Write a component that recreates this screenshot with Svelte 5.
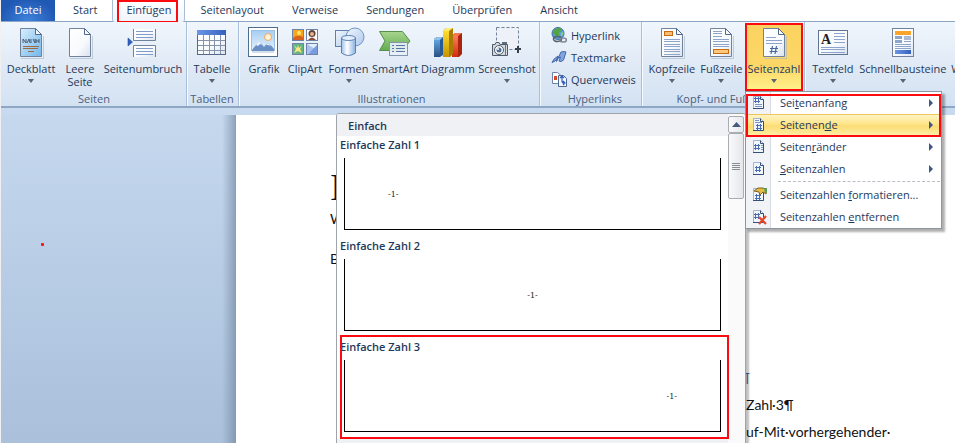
<script>
  const tabs = ['Start', 'Einfügen', 'Seitenlayout', 'Verweise', 'Sendungen', 'Überprüfen', 'Ansicht'];
  const active = 'Einfügen';

  const groups = [
    { name: 'Seiten', pad: 2, items: [
      { icon: 'cover', label: 'Deckblatt', drop: true, w: 56 },
      { icon: 'blank', label: 'Leere', second: 'Seite', w: 42 },
      { icon: 'break', label: 'Seitenumbruch', w: 84 }
    ] },
    { name: 'Tabellen', pad: 0, items: [{ icon: 'table', label: 'Tabelle', drop: true, w: 50 }] },
    { name: 'Illustrationen', pad: 6, items: [
      { icon: 'picture', label: 'Grafik', w: 38 },
      { icon: 'clipart', label: 'ClipArt', w: 44 },
      { icon: 'shapes', label: 'Formen', drop: true, w: 43 },
      { icon: 'smartart', label: 'SmartArt', w: 50 },
      { icon: 'chart', label: 'Diagramm', w: 56 },
      { icon: 'screenshot', label: 'Screenshot', drop: true, w: 62 }
    ] },
    { name: 'Hyperlinks', pad: 10, links: [
      { icon: 'globe', label: 'Hyperlink' },
      { icon: 'bookmark', label: 'Textmarke' },
      { icon: 'crossref', label: 'Querverweis' }
    ] },
    { name: 'Kopf- und Fußzeile', pad: 4, items: [
      { icon: 'header', label: 'Kopfzeile', drop: true, w: 52 },
      { icon: 'footer', label: 'Fußzeile', drop: true, w: 47 },
      { icon: 'number', label: 'Seitenzahl', drop: true, w: 58, open: true }
    ] },
    { name: '', pad: 5, items: [
      { icon: 'textbox', label: 'Textfeld', drop: true, w: 46 },
      { icon: 'parts', label: 'Schnellbausteine', drop: true, w: 94 },
      { icon: '', label: 'WordArt', w: 46 }
    ] }
  ];

  const menu = [
    { kind: 'top', text: ['Sei', 't', 'enanfang'], sub: true },
    { kind: 'bottom', text: ['Seitenen', 'd', 'e'], sub: true, hot: true },
    { kind: 'margin', text: ['Seiten', 'r', 'änder'], sub: true },
    { kind: 'plain', text: ['', 'S', 'eitenzahlen'], sub: true },
    { kind: 'format', text: ['Seitenzahlen ', 'f', 'ormatieren...'], split: true },
    { kind: 'remove', text: ['Seitenzahlen ', 'e', 'ntfernen'] }
  ];

  const presets = [
    { name: 'Einfache Zahl 1', align: 'start' },
    { name: 'Einfache Zahl 2', align: 'center' },
    { name: 'Einfache Zahl 3', align: 'end', marked: true }
  ];
</script>

{#snippet sheet(fill)}
  <path d="M6 31.5H28.5V9" fill="none" stroke="#a9b6c8" opacity=".6" />
  <path d="M5.500 1.500H20.500L26.500 7.500V29.500H5.500Z" fill={fill} stroke="#71829c" />
  <path d="M20.500 1.500V7.500H26.500Z" fill="#f4f8fc" stroke="#53688a" />
{/snippet}

{#snippet bigIcon(name)}
  <svg class="big" viewBox="0 0 32 32" aria-hidden="true">
    {#if name === 'cover'}
      {@render sheet('url(#gCover)')}
      <path d="M8 16V12L11 16V12M12 16L14 12L15 16M16 16V12M18 12L20 16V12M21 12V16M21 14H24M24 12V16" stroke="#4b5c74" fill="none" />
      <path d="M8 19.500H24M8 21.500H23M13 24.500H19" stroke="#a06a45" />
    {:else if name === 'blank'}
      {@render sheet('url(#gPage)')}
    {:else if name === 'break'}
      <path d="M6.500 2V13.500H28.500V2" fill="url(#gPage)" stroke="#71829c" />
      <path d="M9 4.500H26M9 7.500H26M9 10.500H26" stroke="#7f9ccb" />
      <path d="M6.500 30V18.500H28.500V30" fill="url(#gPage)" stroke="#71829c" />
      <path d="M9 21.500H26M9 24.500H26M9 27.500H26" stroke="#7f9ccb" />
      <path d="M1 11L5.500 15L1 19Z" fill="#2f5fc4" stroke="#254a9c" stroke-width=".6" />
    {:else if name === 'table'}
      <rect x="1.500" y="3.500" width="28" height="24" fill="url(#gPage)" stroke="#53688a" />
      <rect x="1" y="3" width="29" height="5" fill="url(#gBlue)" />
      <path d="M2 13.500H29M2 18.500H29M2 23.500H29M7.500 8V27M13.500 8V27M18.500 8V27M24.500 8V27" stroke="#8593a8" />
    {:else if name === 'picture'}
      <rect x=".5" y=".5" width="29" height="29" fill="#fff" stroke="#4f6d8c" />
      <rect x="3.500" y="3.500" width="23" height="20" fill="url(#gSky)" stroke="#9cc0e2" />
      <circle cx="20" cy="10" r="3.500" fill="#fff3d2" stroke="#f0a662" />
      <path d="M4 23Q8 18 11 14.500Q14 17 16 20Q18 17 20 16Q23 18 26 22V24H4Z" fill="#6a8fc4" />
      <path d="M8 18L11 14L14 18L12 17L10 19ZM18 18L20 16L23 19L20 18Z" fill="#eef4fb" />
      <path d="M4 25H26" stroke="#d5dfea" stroke-width="2" />
    {:else if name === 'clipart'}
      <rect x="3.500" y="2.500" width="11" height="11" fill="#f8a51c" stroke="#6d84a8" />
      <path d="M4 11Q8 7 14 10V13H4Z" fill="#d8611c" /><circle cx="10" cy="6" r="2" fill="#ffe36a" />
      <rect x="17.500" y="2.500" width="11" height="11" fill="#fff" stroke="#6d84a8" />
      <circle cx="23" cy="6.500" r="3.500" fill="#5b4537" /><circle cx="23" cy="7" r="2" fill="#e8b48c" /><path d="M19 13Q23 8 27 13Z" fill="#8c4a3b" />
      <rect x="3.500" y="16.500" width="11" height="11" fill="#64b583" stroke="#6d84a8" />
      <path d="M5 18L8 21L9 18L10 21L13 19L11 22L13 26L9 24L5 26L7 22Z" fill="#fbe77c" />
      <rect x="17.500" y="16.500" width="11" height="11" fill="#e6eefc" stroke="#6d84a8" />
      <path d="M18 17L26 22L18 27Z" fill="#a9c0f0" /><path d="M28 18V27H19Z" fill="#7a9be2" />
    {:else if name === 'shapes'}
      <rect x="2.500" y="3.500" width="17" height="16" fill="url(#gLight)" stroke="#5e80af" />
      <circle cx="22" cy="10" r="9" fill="url(#gLight)" stroke="#6f95c8" />
      <path d="M8.500 11V26Q15.500 31 22.500 26V11" fill="url(#gCyl)" stroke="#5e80af" />
      <ellipse cx="15.500" cy="11" rx="7" ry="2.500" fill="#e2eefb" stroke="#5e80af" />
    {:else if name === 'smartart'}
      <path d="M.5 4.500H23.500L31 14L23.500 23.500H.5L6 14Z" fill="url(#gGreen)" stroke="#578f4a" />
      <rect x="10.500" y="15.500" width="18" height="13" fill="#e8eff7" fill-opacity=".92" stroke="#8295ae" />
      <path d="M13 18.500H15M13 21.500H15M13 24.500H15M17 18.500H26M17 21.500H26M17 24.500H26" stroke="#5577a8" />
    {:else if name === 'chart'}
      <path d="M2 12L5 10H11V28L8 30H2Z" fill="#245b98" /><path d="M2 13H8V30H2Z" fill="url(#gBar1)" /><path d="M2 12L5 10H11L8 13H2Z" fill="#8fc0ea" />
      <path d="M20 9L23 6H30V27L27 30H20Z" fill="#a8250c" /><path d="M20 9H26V30H20Z" fill="url(#gBar3)" /><path d="M20 9L23 6H30L26 9Z" fill="#f47a50" />
      <path d="M11 4L14 1H21V27L18 30H11Z" fill="#a67d00" /><path d="M11 4H17V30H11Z" fill="url(#gBar2)" /><path d="M11 4L14 1H21L17 4Z" fill="#ffeb70" />
    {:else if name === 'screenshot'}
      <rect x="5.500" y=".5" width="22" height="22" fill="#eef2f8" stroke="#718197" stroke-dasharray="3 2" />
      <path d="M1.500 17.500H4L5 15.500H8L9 17.500H16.500V28.500H1.500Z" fill="#d4d9df" stroke="#4f5b69" />
      <rect x="11" y="15" width="5" height="2" fill="#5f6c7c" />
      <circle cx="8" cy="23" r="4.500" fill="#f7f9fb" stroke="#4f5b69" /><circle cx="8" cy="23" r="2.500" fill="#4e6f95" /><circle cx="7" cy="22" r="1" fill="#fff" />
      <path d="M14.500 18V28" stroke="#6a7685" /><path d="M27 19V26M24 22H30" stroke="#37404c" stroke-width="2" />
    {:else if name === 'header'}
      {@render sheet('url(#gPage)')}
      <rect x="8.500" y="4.500" width="8" height="4" fill="#f8bd74" stroke="#c96b13" />
      <path d="M8 12.500H24M8 14.500H24M8 17.500H24M8 19.500H24M8 22.500H24M8 24.500H24M8 27.500H24" stroke="#8da5cd" />
    {:else if name === 'footer'}
      {@render sheet('url(#gPage)')}
      <path d="M8 4.500H17M8 6.500H17M8 9.500H17M8 12.500H24M8 14.500H24M8 17.500H24M8 19.500H24" stroke="#8da5cd" />
      <rect x="8.500" y="22.500" width="15" height="4" fill="#fbc97a" stroke="#c96b13" />
    {:else if name === 'number'}
      {@render sheet('url(#gPage)')}
      <path d="M8 10.500H18M8 13.500H24M8 16.500H24" stroke="#8da5cd" />
      <path d="M14.500 19L13 27M18.500 19L17 27M12 21.500H20M11.500 24.500H19.500" stroke="#4867a0" stroke-width="1.200" fill="none" />
    {:else if name === 'textbox'}
      <rect x="1.500" y="3.500" width="29" height="24" fill="url(#gPage)" stroke="#60738f" />
      <text x="4" y="17" class="glyphA">A</text>
      <path d="M17 6.500H28M17 9.500H28M17 12.500H28M17 15.500H28M4 20.500H28M4 22.500H28M4 25.500H28" stroke="#8da5cd" />
    {:else if name === 'parts'}
      <rect x="5.500" y="1.500" width="21" height="28" fill="url(#gPage)" stroke="#71829c" />
      <rect x="8" y="4" width="16" height="4" fill="#fba42c" />
      <rect x="8" y="9" width="7" height="3" fill="#8da5cd" /><rect x="17" y="9" width="7" height="4" fill="#a9bbd9" />
      <rect x="8" y="13" width="7" height="3" fill="#8da5cd" />
      <path d="M17 14.500H24M8 17.500H24M8 19.500H24M8 21.500H24" stroke="#8da5cd" />
      <rect x="8" y="23" width="16" height="4" fill="url(#gBlue)" />
    {/if}
  </svg>
{/snippet}

{#snippet linkIcon(name)}
  <svg class="small" viewBox="0 0 16 16" aria-hidden="true">
    {#if name === 'globe'}
      <circle cx="7" cy="6.500" r="6" fill="#5a9fe0" stroke="#3b6ca3" />
      <path d="M3 3Q6 0 10 1.500L11 4L8 5L8.500 8L6 11L4 8L1.500 6Z" fill="#54a446" /><path d="M10 6L12.500 5L12 8L10 9Z" fill="#8ed07a" />
      <ellipse cx="6.500" cy="12" rx="4" ry="2.500" fill="none" stroke="#55626f" stroke-width="1.600" />
      <ellipse cx="12" cy="13" rx="3.500" ry="2" fill="none" stroke="#7b8794" stroke-width="1.600" />
    {:else if name === 'bookmark'}
      <path d="M1 13.500Q3 9 7 7L5.500 12.500L10 3Q14 2 15 3L12.500 11Q10 13.500 8 12L9.500 8Q6 9 4 12Z" fill="#84a5db" stroke="#3e66ad" />
    {:else if name === 'crossref'}
      <path d="M1.500 1.500H6.500L9.500 4V12.500H1.500Z" fill="#fff" stroke="#6d84a8" /><rect x="3" y="5" width="3" height="4" fill="#d44a28" />
      <path d="M7.500 4.500H12.500L15.500 7.500V15.500H7.500Z" fill="#f3f7fd" stroke="#4d6794" />
      <path d="M9 7L11 5L13 7M11 5.500V10Q11 12 13 12M12 10L14 12L12 14" fill="none" stroke="#2d5fba" stroke-width="1.200" />
    {/if}
  </svg>
{/snippet}

{#snippet hash(x, y)}
  <path transform="translate({x} {y})" d="M1.500 0V6M4.500 0V6M0 1.500H6M0 4.500H6" stroke="#4a6db0" fill="none" />
{/snippet}

{#snippet menuIcon(kind)}
  <svg class="small" viewBox="0 0 16 16" aria-hidden="true">
    <path d="M2.500 1.500H9.500L12.500 4.500V13.500H2.500Z" fill="#f1f6fc" stroke="#a3b4cc" />
    <path d="M9.500 1.500V4.500H12.500V13.500H2" fill="none" stroke="#344f7a" />
    {#if kind === 'top'}
      {@render hash(3, 2)}
      <path d="M4 9.500H11M4 11.500H11" stroke="#7e95bd" />
    {:else if kind === 'bottom'}
      <path d="M4 3.500H8M4 5.500H11" stroke="#7e95bd" />
      {@render hash(5, 7)}
    {:else if kind === 'margin'}
      {@render hash(3, 5)}
      <path d="M10 6.500H12M10 8.500H12M10 10.500H12" stroke="#7e95bd" />
    {:else if kind === 'plain'}
      {@render hash(4, 5)}
    {:else if kind === 'format'}
      {@render hash(4, 7)}
      <path d="M3 4L7 1H12L16 3L15 7L12 5L9 8L8 5Z" fill="#e3bb46" stroke="#80621b" /><path d="M13 1H16V6H14Z" fill="#5d9b5a" />
    {:else}
      {@render hash(3, 4)}
      <path d="M8 8L15 15M15 7L8 15" stroke="#e8452a" stroke-width="2.200" />
    {/if}
  </svg>
{/snippet}

<svg class="defs" width="0" height="0" aria-hidden="true">
  <defs>
    <linearGradient id="gPage" x2="1" y2="1"><stop stop-color="#fff" /><stop offset=".6" stop-color="#f8fafd" /><stop offset="1" stop-color="#d9e2f0" /></linearGradient>
    <linearGradient id="gCover" x2="1" y2="1"><stop stop-color="#d9eefc" /><stop offset="1" stop-color="#72b7ea" /></linearGradient>
    <linearGradient id="gBlue" x2="1" y2="0"><stop stop-color="#6b97e6" /><stop offset="1" stop-color="#3560bd" /></linearGradient>
    <linearGradient id="gSky" x2="0" y2="1"><stop stop-color="#a5cef3" /><stop offset="1" stop-color="#e6f2fc" /></linearGradient>
    <linearGradient id="gLight" x2="1" y2="1"><stop stop-color="#f2f7fd" /><stop offset="1" stop-color="#acc8ea" /></linearGradient>
    <linearGradient id="gCyl"><stop stop-color="#9dc0ea" /><stop offset=".4" stop-color="#fff" /><stop offset="1" stop-color="#86b0e2" /></linearGradient>
    <linearGradient id="gGreen" x2="0" y2="1"><stop stop-color="#a9d58e" /><stop offset="1" stop-color="#62ad50" /></linearGradient>
    <linearGradient id="gBar1" x2="0" y2="1"><stop stop-color="#5ea3e0" /><stop offset="1" stop-color="#2b4f7d" /></linearGradient>
    <linearGradient id="gBar2" x2="0" y2="1"><stop stop-color="#ffdc2e" /><stop offset="1" stop-color="#c69300" /></linearGradient>
    <linearGradient id="gBar3" x2="0" y2="1"><stop stop-color="#ff7d5c" /><stop offset="1" stop-color="#cf2c0c" /></linearGradient>
  </defs>
</svg>

<div class="app">
  <nav class="tabs">
    <button class="file">Datei</button>
    {#each tabs as tab}
      <button class="tab" class:active={tab === active}>
        {tab}
        {#if tab === active}<span class="callout tabMark"></span>{/if}
      </button>
    {/each}
  </nav>

  <div class="ribbon">
    {#each groups as group}
      <section class="group" style:--pad="{group.pad}px">
        {#if group.links}
          <div class="links">
            {#each group.links as link}
              <button class="link">{@render linkIcon(link.icon)}<span>{link.label}</span></button>
            {/each}
          </div>
        {:else}
          <div class="items">
            {#each group.items as item}
              <div class="slot" style:width="{item.w}px">
                <button class="item" class:open={item.open}>
                  {@render bigIcon(item.icon)}
                  <span class="label">{item.label}{#if item.second}<br />{item.second}{/if}</span>
                  {#if item.drop}<span class="caret"></span>{/if}
                </button>
                {#if item.open}
                  <span class="callout"></span>
                  <div class="menu">
                    {#each menu as row}
                      {#if row.split}<div class="split"></div>{/if}
                      <button class="row" class:hot={row.hot}>
                        {@render menuIcon(row.kind)}
                        <span class="rowText">{row.text[0]}<u>{row.text[1]}</u>{row.text[2]}</span>
                        {#if row.sub}<span class="sub"></span>{/if}
                      </button>
                    {/each}
                    <span class="callout menuMark"></span>
                  </div>
                {/if}
              </div>
            {/each}
          </div>
        {/if}
        <div class="groupName">{group.name}</div>
      </section>
    {/each}
  </div>

  <main class="workspace">
    <div class="desk"><span class="dot"></span></div>
    <article class="page">
      <div class="before">
        <h1>I</h1>
        <p>W</p>
        <p class="spaced">B</p>
      </div>
      <div class="after">
        <p class="mark">¶</p>
        <p>Zahl·3¶</p>
        <p>uf-Mit·vorhergehender·</p>
      </div>
    </article>

    <aside class="gallery">
      <div class="list">
        <h2>Einfach</h2>
        {#each presets as preset}
          <button class="preset">
            <span class="presetName">{preset.name}</span>
            <span class="preview" style:justify-content={preset.align}><span>-1-</span></span>
            {#if preset.marked}<span class="callout"></span>{/if}
          </button>
        {/each}
      </div>
      <div class="scroll">
        <button class="up" aria-label="Nach oben"><svg viewBox="0 0 9 5" width="9" height="5"><path d="M0 5L4.500 0L9 5Z" fill="#43597f" /></svg></button>
        <div class="thumb"><i></i><i></i><i></i><i></i></div>
      </div>
    </aside>
  </main>
</div>

<style>
  :global(body) { margin: 0; background: #fff; }
  .defs { position: absolute; }
  .app {
    position: relative;
    display: flex;
    flex-direction: column;
    height: 100vh;
    min-height: 440px;
    overflow: hidden;
    box-sizing: border-box;
    border-left: 1px solid #f0f0f0;
    font: 11px/13px "Open Sans", "Noto Sans", sans-serif;
    color: #1e395b;
  }
  button { font: inherit; color: inherit; border: 0; padding: 0; margin: 0; background: none; }
  .callout {
    position: absolute;
    inset: 0;
    border: 2px solid #fb0a10;
    pointer-events: none;
    z-index: 2;
  }

  .tabs { display: flex; flex: none; height: 22px; box-sizing: border-box; border-bottom: 1px solid #8ba5c4; }
  .file { width: 54px; margin-right: 4px; height: 21px; color: #fff; background: radial-gradient(ellipse at 50% 100%, #3f83dc, #2059b4 75%); padding-bottom: 2px; }
  .tab { position: relative; padding: 0 14px 2px; height: 21px; }
  .tab.active { height: 22px; margin: 0 1px; padding: 0 13px 3px; border: solid #a9bdd6; border-width: 0 1px; border-radius: 0 0 3px 3px; background: linear-gradient(#fff, #eff5fc); }
  .tabMark { inset: 0 6px -1px 4px; }

  .ribbon {
    display: flex;
    flex: none;
    height: 86px;
    box-sizing: border-box;
    background: linear-gradient(#f0f6fc, #dfe9f5 55%, #d3e2f3);
    border-bottom: 2px solid #8fa7c2;
    position: relative;
    z-index: 3;
  }
  .group { display: flex; flex-direction: column; flex: none; border-right: 1px solid #a9bfda; box-shadow: 1px 0 #f6faff; padding: 1px 1px 0 var(--pad); }
  .items { display: flex; height: 68px; }
  .slot { position: relative; flex: none; }
  .item { display: flex; flex-direction: column; align-items: center; width: 100%; height: 68px; padding-top: 4px; white-space: nowrap; }
  .big { width: 32px; height: 32px; flex: none; margin-bottom: 3px; }
  .label { line-height: 13px; text-align: center; }
  .caret { margin-top: 4px; border: solid transparent; border-width: 4px 3px 0; border-top-color: #5c6470; }
  .open { background: linear-gradient(#fbd25e, #fcd768 65%, #fff38c); }
  .glyphA { font: bold 14px "Liberation Serif", serif; fill: #222; }
  .groupName { text-align: center; line-height: 15px; color: #4c5f7d; white-space: nowrap; }
  .links { display: flex; flex-direction: column; height: 68px; padding: 1px 4px 1px 0; box-sizing: border-box; }
  .link { display: flex; align-items: center; gap: 4px; height: 22px; padding-left: 1px; white-space: nowrap; }
  .small { width: 16px; height: 16px; flex: none; }

  .menu {
    position: absolute;
    top: 68px;
    left: 0;
    width: 195px;
    background: linear-gradient(90deg, #f1f3f6 24px, #d9dde3 24px, #d9dde3 25px, #fff 25px);
    border: 1px solid #8e959f;
    box-shadow: 3px 3px 2px #00000050;
  }
  .row { display: flex; align-items: center; width: 100%; height: 22px; padding: 0 8px 0 5px; gap: 13px; text-align: left; }
  .rowText { flex: 1; padding-bottom: 1px; white-space: nowrap; }
  .row.hot { background: linear-gradient(#fff5cb, #ffe58a 45%, #fbdc74 55%, #fff1a8); box-shadow: inset 0 0 0 1px #ecc65a; }
  .sub { border: solid transparent; border-width: 4px 0 4px 4px; border-left-color: #3c5685; }
  .split { margin: 1px 1px 2px 32px; border-top: 1px dashed #b8bfc8; }
  .menuMark { inset: 2px 0 auto 0; height: 39px; }

  .workspace {
    position: relative;
    display: grid;
    grid-template-columns: 235px 1fr;
    flex: 1;
    min-height: 0;
    border-top: 7px solid #c8daef;
  }
  .desk { position: relative; background: linear-gradient(90deg, transparent 221px, #6b7f9a90 234px, #8899ae), linear-gradient(#c5d8ee, #aac0db); }
  .dot { position: absolute; left: 40px; top: 128px; width: 3px; height: 3px; background: #f5121a; border-radius: 1px; }
  .page { display: flex; background: #fff; color: #111; overflow: hidden; font: 14px/27px Lato, sans-serif; }
  .page p, .page h1 { margin: 0; }
  .before { width: 415px; box-sizing: border-box; padding: 54px 0 0 94px; }
  .before h1 { font: 38px/36px "Liberation Serif", serif; }
  .page .spaced { margin-top: 14px; line-height: 26px; }
  .after { padding: 249px 0 0 95px; }
  .page .mark { color: #2b6cb8; margin-left: -6px; }

  .gallery {
    position: absolute;
    top: -2px;
    bottom: -2px;
    left: 335px;
    width: 410px;
    box-sizing: border-box;
    display: flex;
    background: #fff;
    border: 1px solid #9fa3aa;
    border-radius: 3px 3px 0 0;
    box-shadow: 3px 3px 2px #00000040;
    overflow: hidden;
  }
  .list { flex: 1; background: #f0f1f5; }
  h2 { margin: 1px 0 0; padding-left: 11px; font: 600 11px/21px "Open Sans", sans-serif; background: #f0f1f5; }
  .preset { position: relative; display: block; width: 100%; height: 101px; padding: 2px 7px 7px 3px; text-align: left; background: #fff; }
  .presetName { display: block; font-weight: 600; margin-bottom: 7px; }
  .preview { display: flex; align-items: center; height: 72px; box-sizing: border-box; margin-left: 4px; padding: 3px 43px 0; border: solid #000; border-width: 0 1px 1px; }
  .preview > span { font: 8px/10px "DejaVu Serif", serif; color: #222; }
  .preset .callout { inset: -3px -1px 0 3px; }
  .scroll { width: 17px; background: #fafafb; padding: 2px 1px 0 0; box-sizing: border-box; }
  .up, .thumb { width: 16px; box-sizing: border-box; border: 1px solid #a8acb3; border-radius: 2px; background: linear-gradient(90deg, #f9f9fa, #e6e7ea); }
  .up { display: flex; align-items: center; justify-content: center; height: 17px; }
  .thumb { height: 66px; display: flex; flex-direction: column; align-items: center; justify-content: center; gap: 1px; }
  .thumb i { width: 8px; height: 1px; background: #878d96; }
</style>
